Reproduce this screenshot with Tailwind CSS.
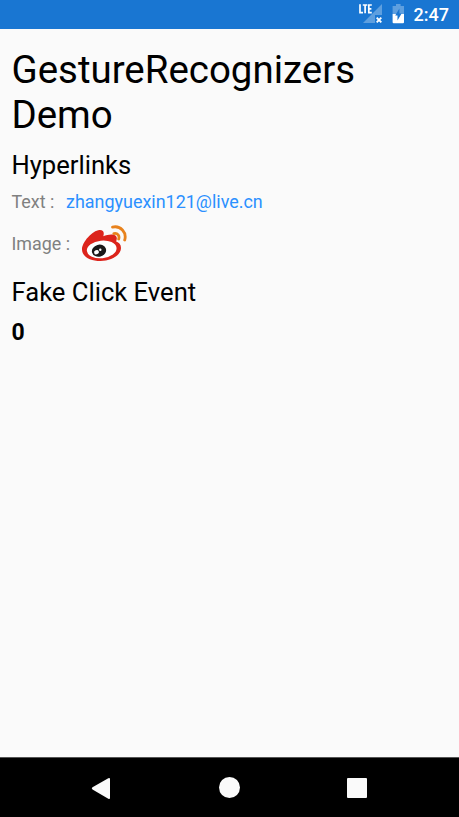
<!DOCTYPE html>
<html lang="en">
<head>
<meta charset="utf-8">
<title>GestureRecognizers Demo</title>
<script src="https://cdn.jsdelivr.net/npm/@tailwindcss/browser@4"></script>
</head>
<body class="flex h-screen flex-col overflow-hidden bg-[#fafafa] font-[Roboto,sans-serif] text-black">
  <header class="flex h-[29px] shrink-0 items-center justify-end bg-[#1976d2] pr-[10px] text-white">
    <svg class="mr-[9px] h-[29px] w-[24px]" viewBox="0 0 24 29">
      <path d="M23 4V23H4Z" fill="#5e9fdf"/>
      <path d="M16 15h8v9h-8z" fill="#1976d2"/>
      <path d="M17.7 17.7l4.600 4.600m0-4.600l-4.600 4.600" stroke="#fff" stroke-width="1.900"/>
      <path d="M1 4.300v8.300h3M3.800 5h4.500M6.100 5v8.300M12.800 5H9.800v7.600h3M9.800 8.800h2.600" fill="none" stroke="#fff" stroke-width="1.700"/>
    </svg>
    <svg class="mr-[9px] h-[29px] w-[13px]" viewBox="0 0 13 29">
      <path d="M4 4h4.600v2H12v8H.6V6H4z" fill="#5e9fdf"/>
      <path d="M.6 14H12v8.200a1 1 0 0 1-1 1H1.600a1 1 0 0 1-1-1z" fill="#fff"/>
      <path d="M7.400 8.500v5h2.200L5.500 20.500v-5H3.200z" fill="#1976d2"/>
    </svg>
    <span class="text-[18px] font-medium leading-[29px]">2:47</span>
  </header>
  <main class="flex-1 px-[11.500px] pt-[18px]">
    <h1 class="text-[38.450px] leading-[45px]">GestureRecognizers<br>Demo</h1>
    <h2 class="mt-[13px] text-[25.600px] leading-[30px]">Hyperlinks</h2>
    <div class="mt-[12px] flex h-[20px] items-center text-[17.950px] leading-[20px] text-[#808080]">
      <span class="w-[54.500px] whitespace-nowrap">Text :</span>
      <a class="text-[#2b90ff]">zhangyuexin121@live.cn</a>
    </div>
    <div class="mt-[8px] flex h-[48px] items-center text-[17.900px] text-[#808080]">
      <span class="w-[68.500px] whitespace-nowrap">Image :</span>
      <svg class="mb-[2px] h-[40px] w-[48px]" viewBox="0 0 48 40">
        <path d="M2 26.500C2 19 12.500 7.500 19.500 7C23.500 6.800 24.500 9.500 23.300 13.300C28 11.300 34.500 10.500 36.300 13.500C37.500 15.500 36.300 17 36.200 18.600C39 19.500 41 21.500 41 25C41 32 31.500 38 20.500 38C10 38 2 33.500 2 26.500Z" fill="#dc241c"/>
        <ellipse cx="21.700" cy="26.400" rx="14.900" ry="8.800" transform="rotate(-6 21.700 26.400)" fill="#fff"/>
        <ellipse cx="19" cy="27.700" rx="7.200" ry="6" transform="rotate(-15 19 27.700)" fill="#1b1919"/>
        <ellipse cx="16.500" cy="29.200" rx="2.500" ry="2.100" transform="rotate(-25 16.500 29.200)" fill="#fff"/>
        <circle cx="20.300" cy="26.800" r="1.200" fill="#fff"/>
        <path d="M32.500 4.100C40.500 2.200 47 9.500 44.700 17M33.800 10.600C37.800 9.800 39.800 12.800 38.700 16" fill="none" stroke="#e8821c" stroke-width="2.800" stroke-linecap="round"/>
      </svg>
    </div>
    <h2 class="mt-[9px] text-[25.600px] leading-[30px]">Fake Click Event</h2>
    <p class="mt-[12px] text-[23px] font-bold leading-[27px]">0</p>
  </main>
  <nav class="flex h-[60px] shrink-0 items-center justify-between border-t border-[#555] bg-black pr-[92px] pl-[91px]">
    <svg class="h-[24px] w-[20px]" viewBox="0 0 20 24"><path d="M1.500 11.300L17.300 2.200Q19 1.300 19 3.200V21.800Q19 23.700 17.300 22.700L1.500 13.500Q0 12.400 1.500 11.300Z" fill="#fafafa"/></svg>
    <div class="size-[21px] rounded-full bg-[#fafafa]"></div>
    <div class="size-[20px] rounded-[1px] bg-[#fafafa]"></div>
  </nav>
</body>
</html>
